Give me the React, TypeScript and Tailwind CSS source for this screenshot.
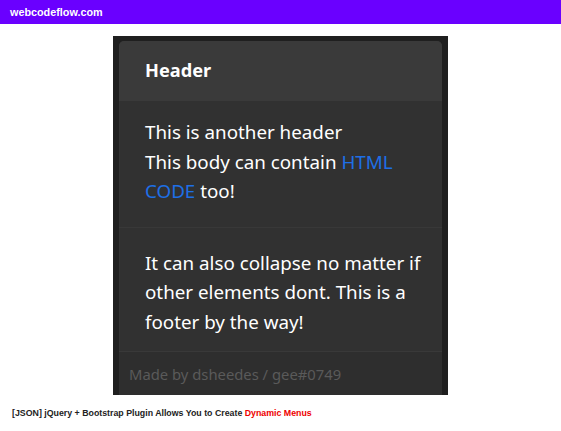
import React from 'react';

export default function App() {
  return (
    <div className="w-[561px] h-[431px] bg-white overflow-hidden" style={{ fontFamily: '"Liberation Sans", Arial, sans-serif' }}>
      {/* TOP BAR */}
      <div className="h-[24px] bg-[#6a00ff] flex items-center px-[10px]">
        <span className="text-white font-bold text-[10.8px]">webcodeflow.com</span>
      </div>

      {/* DEMO FRAME */}
      <div className="mt-[12px] mx-auto w-[335px] h-[359px] bg-[#1f1f1f] pt-[5px] px-[6px] overflow-hidden">
        <div className="rounded-t-[5px] overflow-hidden bg-[#313131]" style={{ fontFamily: '"Noto Sans", "Open Sans", sans-serif' }}>
          <div className="h-[60px] bg-[#3a3a3a] flex items-center px-[26px]">
            <span className="text-white font-bold text-[18.2px]">Header</span>
          </div>

          <div className="pl-[26px] pr-[16px] pt-[17px] text-white text-[18.8px] leading-[29.5px]">
            <p>This is another header</p>
            <p>
              This body can contain <span className="text-[#1e6fe6]">HTML CODE</span> too!
            </p>
          </div>
          <div className="mt-[20px] border-t border-[#383838]"></div>
          <div className="pl-[26px] pr-[16px] pt-[21px] pb-[14px] text-white text-[18.8px] leading-[29.5px]">
            <p>It can also collapse no matter if other elements dont. This is a footer by the way!</p>
          </div>

          <div className="border-t border-[#393939] bg-[#2e2e2e] h-[50px] px-[10px] pt-[10px]">
            <span className="text-[#5a5a5a] text-[14.8px]">Made by dsheedes / gee#0749</span>
          </div>
        </div>
      </div>

      {/* CAPTION */}
      <div className="px-[12px] pt-[12px] text-[8.8px] font-bold text-[#222]">
        [JSON] jQuery + Bootstrap Plugin Allows You to Create <span className="text-[#e00]">Dynamic Menus</span>
      </div>
    </div>
  );
}
